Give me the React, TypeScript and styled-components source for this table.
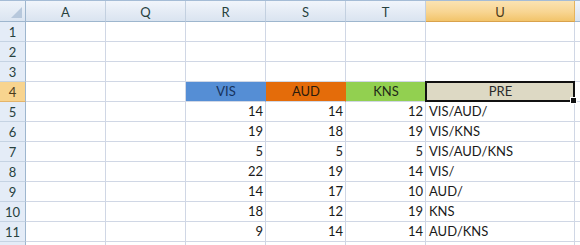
import React from "react";
import styled, { createGlobalStyle, css } from "styled-components";

const GlobalStyle = createGlobalStyle`
  html, body {
    margin: 0;
    padding: 0;
    background: #ffffff;
    overflow: hidden;
  }
`;

// V is only a sliver at the right edge, so it carries no label
const COLUMNS = ["A", "Q", "R", "S", "T", "U", "V"];
const HIDDEN_LABELS = ["V"];
const SELECTED_COL = "U";
const SELECTED_ROW = 4;
const LAST_LABELLED_ROW = 11;

type Tone = "blue" | "orange" | "green" | "tan";

interface Cell {
  text: string;
  align?: "left" | "right" | "center";
  tone?: Tone;
  active?: boolean;
}

const TONES: Record<Tone, { bg: string; fg: string }> = {
  blue: { bg: "#558ed5", fg: "#17325c" },
  orange: { bg: "#e46c0a", fg: "#2a1a0c" },
  green: { bg: "#92d050", fg: "#1f2a18" },
  tan: { bg: "#ddd9c4", fg: "#2a2a2a" },
};

const DATA: [number, number, number, string][] = [
  [14, 14, 12, "VIS/AUD/"],
  [19, 18, 19, "VIS/KNS"],
  [5, 5, 5, "VIS/AUD/KNS"],
  [22, 19, 14, "VIS/"],
  [14, 17, 10, "AUD/"],
  [18, 12, 19, "KNS"],
  [9, 14, 14, "AUD/KNS"],
];

const buildRows = (): Record<number, Record<string, Cell>> => {
  const rows: Record<number, Record<string, Cell>> = {};
  rows[4] = {
    R: { text: "VIS", align: "center", tone: "blue" },
    S: { text: "AUD", align: "center", tone: "orange" },
    T: { text: "KNS", align: "center", tone: "green" },
    U: { text: "PRE", align: "center", tone: "tan", active: true },
  };
  DATA.forEach(([r, s, t, u], i) => {
    rows[5 + i] = {
      R: { text: String(r), align: "right" },
      S: { text: String(s), align: "right" },
      T: { text: String(t), align: "right" },
      U: { text: u, align: "left" },
    };
  });
  return rows;
};

const ROWS = buildRows();
const ROW_NUMBERS = Array.from({ length: 12 }, (_, i) => i + 1);

const App: React.FC = () => {
  return (
    <>
      <GlobalStyle />
      <Sheet>
        <Corner>
          <span className="tri" />
        </Corner>
        {COLUMNS.map((col) => (
          <ColHeader key={col} $selected={col === SELECTED_COL}>
            {HIDDEN_LABELS.includes(col) ? null : col}
          </ColHeader>
        ))}

        {ROW_NUMBERS.map((n) => (
          <React.Fragment key={n}>
            <RowHeader $selected={n === SELECTED_ROW}>
              {n <= LAST_LABELLED_ROW ? n : null}
            </RowHeader>
            {COLUMNS.map((col) => {
              const cell = ROWS[n]?.[col];
              return (
                <GridCell
                  key={col}
                  $align={cell?.align ?? "left"}
                  $tone={cell?.tone}
                >
                  {cell?.text}
                  {cell?.active && (
                    <>
                      <ActiveFrame />
                      <FillHandle />
                    </>
                  )}
                </GridCell>
              );
            })}
          </React.Fragment>
        ))}
      </Sheet>
    </>
  );
};

export default App;

const font = css`
  font-family: Lato, "Open Sans", "Liberation Sans", sans-serif;
  font-size: 13px;
`;

const Sheet = styled.div`
  display: grid;
  grid-template-columns: 26px 80px 80px 80px 80px 80px 149px 80px;
  grid-template-rows: 21px;
  grid-auto-rows: 20px;
  width: 580px;
  height: 245px;
  overflow: hidden;
  border-top: 1px solid #a5bcd6;
  box-sizing: border-box;
  ${font};
`;

const headerBase = css`
  display: flex;
  align-items: center;
  justify-content: center;
  box-sizing: border-box;
  color: #27413e;
  ${font};
`;

const Corner = styled.div`
  ${headerBase};
  position: relative;
  background: linear-gradient(#eef3fa, #dbe5f1);
  border-right: 1px solid #9eb6ce;
  border-bottom: 1px solid #9eb6ce;

  .tri {
    position: absolute;
    right: 3px;
    bottom: 3px;
    width: 0;
    height: 0;
    border-left: 11px solid transparent;
    border-bottom: 11px solid #b7c8dc;
  }
`;

const ColHeader = styled.div<{ $selected: boolean }>`
  ${headerBase};
  padding-top: 1px;
  background: ${(p) =>
    p.$selected
      ? "linear-gradient(#fbe3b2, #f8d592 55%, #f2c46a)"
      : "linear-gradient(#f1f5fb, #e4ebf5 55%, #dae4f0)"};
  border-right: 1px solid ${(p) => (p.$selected ? "#e5b35c" : "#c3d0e0")};
  border-bottom: 1px solid ${(p) => (p.$selected ? "#d9a24c" : "#9eb6ce")};
  color: ${(p) => (p.$selected ? "#4a3b1c" : "#27413e")};
`;

const RowHeader = styled.div<{ $selected: boolean }>`
  ${headerBase};
  background: ${(p) => (p.$selected ? "#f8d48f" : "#e4ecf7")};
  border-right: 1px solid #9eb6ce;
  border-bottom: 1px solid ${(p) => (p.$selected ? "#e4b46a" : "#c5d3e3")};
  color: ${(p) => (p.$selected ? "#4a3b1c" : "#27413e")};
`;

const GridCell = styled.div<{ $align: "left" | "right" | "center"; $tone?: Tone }>`
  position: relative;
  display: flex;
  align-items: flex-end;
  justify-content: ${(p) =>
    p.$align === "right" ? "flex-end" : p.$align === "center" ? "center" : "flex-start"};
  padding: 0 2px 1px 3px;
  box-sizing: border-box;
  white-space: nowrap;
  line-height: 18px;
  background: ${(p) => (p.$tone ? TONES[p.$tone].bg : "#ffffff")};
  color: ${(p) => (p.$tone ? TONES[p.$tone].fg : "#1a1a1a")};
  border-right: 1px solid ${(p) => (p.$tone ? TONES[p.$tone].bg : "#d0d7e5")};
  border-bottom: 1px solid #d0d7e5;
`;

const ActiveFrame = styled.span`
  position: absolute;
  left: -1px;
  top: -1px;
  right: -1px;
  bottom: -1px;
  border: 2px solid #111111;
  pointer-events: none;
`;

const FillHandle = styled.span`
  position: absolute;
  right: -3px;
  bottom: -3px;
  width: 5px;
  height: 5px;
  background: #111111;
  border: 1px solid #ffffff;
  z-index: 2;
`;
